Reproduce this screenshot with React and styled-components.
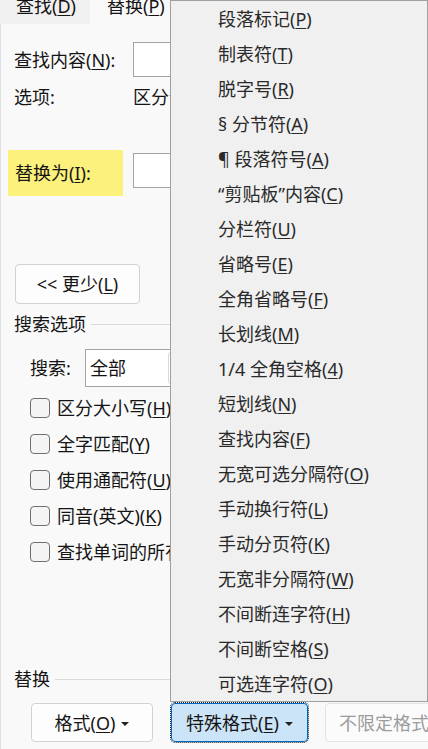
import React from 'react';
import styled, { createGlobalStyle } from 'styled-components';

const GlobalStyle = createGlobalStyle`
  html, body { margin: 0; padding: 0; }
  body {
    background: #f9f9f9;
    font-family: "Noto Sans", "Noto Sans CJK SC", sans-serif;
    font-size: 18px;
    color: #141414;
  }
`;

const specials = [
  ['段落标记', 'P'], ['制表符', 'T'], ['脱字号', 'R'], ['§ 分节符', 'A'],
  ['¶ 段落符号', 'A'], ['“剪贴板”内容', 'C'], ['分栏符', 'U'], ['省略号', 'E'],
  ['全角省略号', 'F'], ['长划线', 'M'], ['1/4 全角空格', '4'], ['短划线', 'N'],
  ['查找内容', 'F'], ['无宽可选分隔符', 'O'], ['手动换行符', 'L'], ['手动分页符', 'K'],
  ['无宽非分隔符', 'W'], ['不间断连字符', 'H'], ['不间断空格', 'S'], ['可选连字符', 'O'],
];

const options = [
  ['区分大小写', 'H'], ['全字匹配', 'Y'], ['使用通配符', 'U'],
  ['同音(英文)', 'K'], ['查找单词的所有形式(英文)', 'W'],
];

const Frame = styled.div`
  position: relative;
  width: 428px;
  height: 749px;
  overflow: hidden;
  display: flex;
  flex-direction: column;
  white-space: nowrap;
`;

const TabStrip = styled.div`
  display: flex;
  height: 24px;
`;

const Tab = styled.div`
  height: 24px;
  box-sizing: border-box;
  line-height: 12px;
  padding: 0 14px 0 ${p => (p.$active ? 17 : 16)}px;
  width: ${p => (p.$active ? 'auto' : '90px')};
  background: ${p => (p.$active ? '#f9f9f9' : '#f0f0f0')};
`;

const Panel = styled.div`
  flex: 1;
  display: flex;
  flex-direction: column;
  border-left: 1px solid #e0e0e0;
  padding: 0 0 7px 13px;
  line-height: 24px;
`;

const FieldRow = styled.div`
  display: flex;
  align-items: center;
  height: ${p => p.$h}px;
  margin-top: ${p => p.$mt}px;
`;

const FieldLabel = styled.div`
  width: 119px;
  flex-shrink: 0;
`;

const Highlight = styled.div`
  width: 115px;
  height: 46px;
  margin-left: -6px;
  padding-left: 7px;
  box-sizing: border-box;
  background: #fbf17c;
  display: flex;
  align-items: center;
  flex-shrink: 0;
`;

const TextBox = styled.div`
  width: 320px;
  height: 35px;
  flex-shrink: 0;
  box-sizing: border-box;
  background: #fff;
  border: 1px solid #a3a3a3;
  margin-left: ${p => p.$ml || 0}px;
  align-self: ${p => (p.$top ? 'flex-start' : 'center')};
  margin-top: ${p => (p.$top ? 3 : 0)}px;
`;

const Key = styled.u`
  text-decoration-thickness: 1px;
  text-underline-offset: 2px;
`;

const PlainButton = styled.div`
  width: ${p => p.$w}px;
  height: ${p => p.$h}px;
  box-sizing: border-box;
  border: 1px solid #d2d2d2;
  border-radius: 4px;
  background: #fdfdfd;
  display: flex;
  align-items: center;
  justify-content: center;
  flex-shrink: 0;
`;

const LessButton = styled(PlainButton)`
  margin-top: 68px;
  margin-left: 1px;
`;

const GroupHead = styled.div`
  display: flex;
  align-items: center;
  height: 24px;
  margin-top: ${p => p.$mt};
`;

const GroupLine = styled.div`
  flex: 1;
  height: 1px;
  margin-left: 5px;
  background: #dadada;
`;

const SearchRow = styled.div`
  display: flex;
  align-items: center;
  margin-top: 13px;
  padding-left: 16px;
`;

const SearchLabel = styled.div`
  width: 55px;
`;

const Select = styled.div`
  width: 220px;
  height: 38px;
  box-sizing: border-box;
  border: 1px solid #a3a3a3;
  background: #fff;
  display: flex;
  align-items: center;
  padding-left: 4px;
`;

const SelectValue = styled.div`
  width: 78px;
`;

const SelectArrow = styled.div`
  height: 32px;
  width: 40px;
  box-sizing: border-box;
  border: 1px solid #d8d8d8;
  border-radius: 3px;
`;

const CheckList = styled.div`
  margin-top: 3px;
  padding-left: 16px;
  display: flex;
  flex-direction: column;
`;

const CheckRow = styled.div`
  display: flex;
  align-items: center;
  height: 36px;
  gap: 7px;
`;

const Box = styled.div`
  width: 20px;
  height: 20px;
  box-sizing: border-box;
  border: 1px solid #6f6f6f;
  border-radius: 4px;
  background: #f4f4f4;
  flex-shrink: 0;
`;

const BottomBar = styled.div`
  display: flex;
  gap: 17px;
  margin-top: 12px;
  padding-left: 17px;
`;

const FormatButton = styled(PlainButton)`
  gap: 6px;
`;

const SpecialButton = styled(FormatButton)`
  background: #cce4f7;
  border-color: #0067c0;
  outline: 1px dotted #222;
  outline-offset: 0;
  margin-left: 1px;
`;

const MutedButton = styled(PlainButton)`
  justify-content: flex-start;
  padding-left: 13px;
  color: #9c9c9c;
  border-color: #e3e3e3;
  background: #fbfbfb;
`;

const Caret = styled.span`
  width: 0;
  height: 0;
  border-left: 4px solid transparent;
  border-right: 4px solid transparent;
  border-top: 4px solid #222;
  margin-top: 2px;
`;

const Menu = styled.div`
  position: absolute;
  left: 170px;
  top: 0;
  width: 258px;
  height: 702px;
  box-sizing: border-box;
  padding-top: 1px;
  background: #f0f0f0;
  border: 1px solid #a0a0a0;
  display: flex;
  flex-direction: column;
`;

const MenuItem = styled.div`
  height: 35px;
  line-height: 35px;
  padding-left: 47px;
  color: #2a2a2a;
`;

const Mn = ({ text, k }) => (
  <>
    {text}(<Key>{k}</Key>)
  </>
);

export default function App() {
  return (
    <Frame>
      <GlobalStyle />
      <TabStrip>
        <Tab><Mn text="查找" k="D" /></Tab>
        <Tab $active><Mn text="替换" k="P" /></Tab>
      </TabStrip>
      <Panel>
        <FieldRow $h={35} $mt={18}>
          <FieldLabel><Mn text="查找内容" k="N" />:</FieldLabel>
          <TextBox />
        </FieldRow>
        <FieldRow $h={24} $mt={8}>
          <FieldLabel>选项:</FieldLabel>
          <div>区分全/半角</div>
        </FieldRow>
        <FieldRow $h={46} $mt={41}>
          <Highlight><Mn text="替换为" k="I" />:</Highlight>
          <TextBox $ml={10} $top />
        </FieldRow>
        <LessButton $w={125} $h={40}>
          <span>&lt;&lt; 更少(<Key>L</Key>)</span>
        </LessButton>
        <GroupHead $mt="8px">
          <span>搜索选项</span>
          <GroupLine />
        </GroupHead>
        <SearchRow>
          <SearchLabel>搜索:</SearchLabel>
          <Select>
            <SelectValue>全部</SelectValue>
            <SelectArrow />
          </Select>
        </SearchRow>
        <CheckList>
          {options.map(([text, k]) => (
            <CheckRow key={text}>
              <Box />
              <span><Mn text={text} k={k} /></span>
            </CheckRow>
          ))}
        </CheckList>
        <GroupHead $mt="auto">
          <span>替换</span>
          <GroupLine />
        </GroupHead>
        <BottomBar>
          <FormatButton $w={122} $h={39}>
            <span><Mn text="格式" k="O" /></span>
            <Caret />
          </FormatButton>
          <SpecialButton $w={137} $h={39}>
            <span><Mn text="特殊格式" k="E" /></span>
            <Caret />
          </SpecialButton>
          <MutedButton $w={130} $h={39}>
            <span>不限定格式(<Key>T</Key>)</span>
          </MutedButton>
        </BottomBar>
      </Panel>
      <Menu>
        {specials.map(([text, k], i) => (
          <MenuItem key={i}><Mn text={text} k={k} /></MenuItem>
        ))}
      </Menu>
    </Frame>
  );
}
